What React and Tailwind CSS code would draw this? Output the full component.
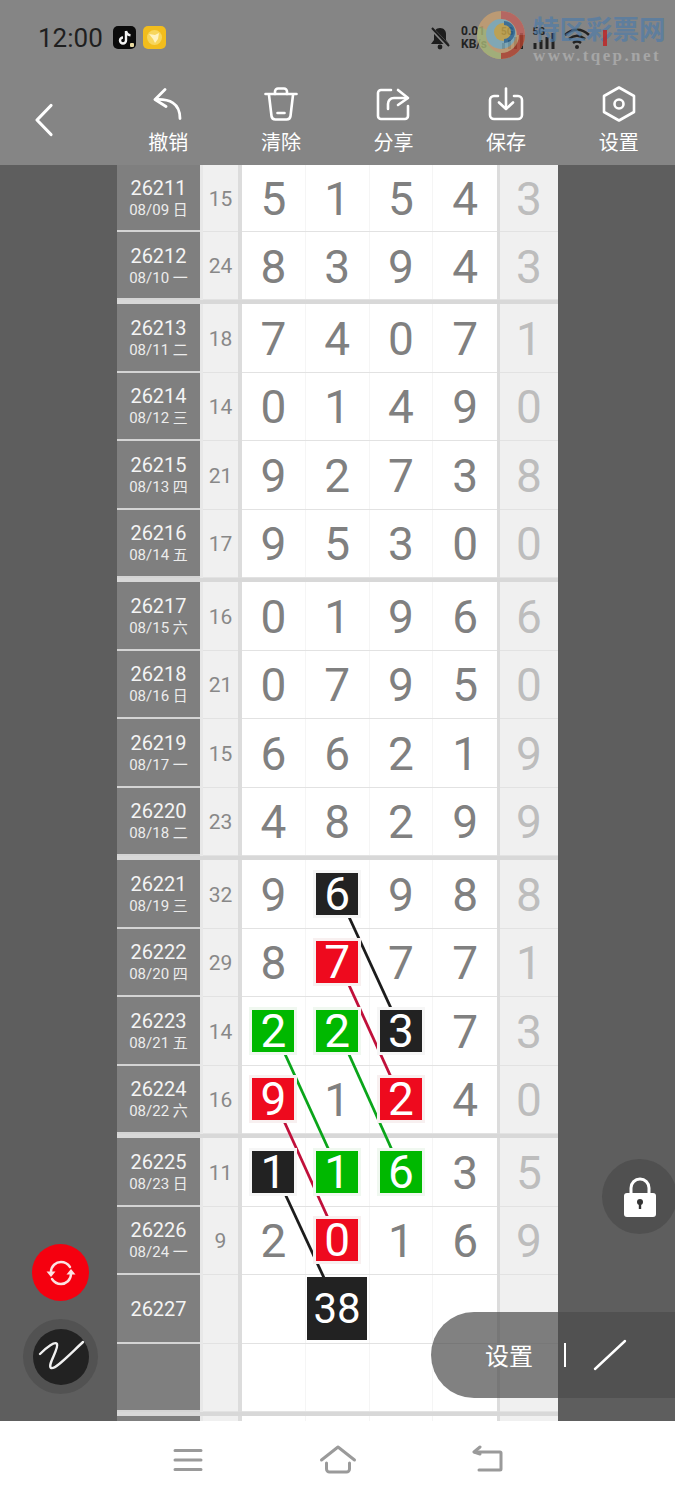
const ROWS = [
  { n: "26211", d: "08/09 日", s: "15", c: "5154", r: "3", h: "h-[67px]" },
  { n: "26212", d: "08/10 一", s: "24", c: "8394", r: "3", h: "h-[68px]", end: true },
  { n: "26213", d: "08/11 二", s: "18", c: "7407", r: "1" },
  { n: "26214", d: "08/12 三", s: "14", c: "0149", r: "0" },
  { n: "26215", d: "08/13 四", s: "21", c: "9273", r: "8" },
  { n: "26216", d: "08/14 五", s: "17", c: "9530", r: "0", end: true },
  { n: "26217", d: "08/15 六", s: "16", c: "0196", r: "6" },
  { n: "26218", d: "08/16 日", s: "21", c: "0795", r: "0" },
  { n: "26219", d: "08/17 一", s: "15", c: "6621", r: "9" },
  { n: "26220", d: "08/18 二", s: "23", c: "4829", r: "9", end: true },
  { n: "26221", d: "08/19 三", s: "32", c: "9698", r: "8", m: { 1: "k" } },
  { n: "26222", d: "08/20 四", s: "29", c: "8777", r: "1", m: { 1: "r" } },
  { n: "26223", d: "08/21 五", s: "14", c: "2237", r: "3", m: { 0: "g", 1: "g", 2: "k" } },
  { n: "26224", d: "08/22 六", s: "16", c: "9124", r: "0", m: { 0: "r", 2: "r" }, end: true },
  { n: "26225", d: "08/23 日", s: "11", c: "1163", r: "5", m: { 0: "k", 1: "g", 2: "g" } },
  { n: "26226", d: "08/24 一", s: "9", c: "2016", r: "9", m: { 1: "r" } },
  { n: "26227", d: "", s: "", c: "    ", r: "", big: "38" },
  { n: "", d: "", s: "", c: "    ", r: "", end: true },
  { n: "", d: "", s: "", c: "    ", r: "" },
];

const BOX = {
  k: "bg-[#222222] ring-[#f6f6f6]",
  r: "bg-[#ee0a1e] ring-[#f8f0f0]",
  g: "bg-[#00b800] ring-[#f0f8f0]",
};

const LINES = [
  { p: [338, 893, 401, 1030], c: "#1c1c1c" },
  { p: [338, 961, 401, 1099], c: "#c0103a" },
  { p: [274, 1030, 338, 1170], c: "#0aa51a" },
  { p: [338, 1030, 401, 1170], c: "#0aa51a" },
  { p: [274, 1099, 338, 1240], c: "#c0103a" },
  { p: [274, 1170, 338, 1308], c: "#1c1c1c" },
];

function Row({ row }) {
  const h = row.h || "h-[68.5px]";
  return (
    <div className={`grid grid-cols-[83px_3px_35px_4px_255px_3px_58px] ${h}`}>
      <div className="flex flex-col items-center justify-center bg-[#7f7f7f] pt-[1px] text-white border-b-2 border-[#d4d4d4]">
        <div className="text-[20px] leading-[24px] text-[#f4f4f4]">{row.n}</div>
        {row.d && <div className="text-[15px] leading-[20px] text-[#ececec]">{row.d}</div>}
      </div>
      <div className="bg-[#e8e8e8]" />
      <div className="flex items-center justify-center bg-[#f0f0f0] border-b border-[#e2e2e2] pt-[3px] text-[21px] text-[#888888]">{row.s}</div>
      <div className="bg-[#dcdcdc]" />
      <div className="grid grid-cols-4 bg-white border-b border-[#e2e2e2]">
        {row.c.split("").map((ch, i) => {
          const mark = row.m && row.m[i];
          const big = !mark && !ch.trim() && row.big && i === 1;
          return (
            <div key={i} className="flex items-center justify-center border-r border-[#f5f5f5] last:border-r-0 text-[46px] leading-none text-[#808080]">
              {mark ? (
                <div className={`relative z-10 flex h-[42px] w-[42px] items-center justify-center text-[46px] leading-none text-white ring-[3px] ${BOX[mark]}`}>{ch}</div>
              ) : big ? (
                <div className="relative z-10 flex h-[63px] w-[60px] shrink-0 items-center justify-center bg-[#222222] text-[42px] leading-none text-white">{row.big}</div>
              ) : ch.trim() ? (
                <span className="pt-[2px]">{ch}</span>
              ) : null}
            </div>
          );
        })}
      </div>
      <div className="bg-[#dcdcdc]" />
      <div className="flex items-center justify-center bg-[#f0f0f0] border-b border-[#e2e2e2] pt-[2px] text-[46px] leading-none text-[#bdbdbd]">{row.r}</div>
    </div>
  );
}

function ToolItem({ label, children }) {
  return (
    <div className="flex w-[112.6px] flex-col items-center">
      <div className="flex h-[38px] items-center justify-center pt-[1px]">{children}</div>
      <div className="mt-[9px] text-[20px] leading-[24px] text-white">{label}</div>
    </div>
  );
}

function Signal({ w }) {
  return (
    <svg width={w} height="24" viewBox="0 0 24 24">
      <text x="0" y="9" fontSize="10" fontWeight="700" fill="#222">5G</text>
      <rect x="1" y="17" width="3" height="6" fill="#222" />
      <rect x="7" y="14" width="3" height="9" fill="#222" />
      <rect x="13" y="11" width="3" height="12" fill="#222" />
      <rect x="19" y="7" width="3" height="16" fill="#222" />
    </svg>
  );
}

function StatusIcons() {
  return (
    <div className="flex items-center">
      <svg width="22" height="24" viewBox="0 0 22 24" className="mr-[10px]">
        <path d="M11 2c-4 0-6 3-6 6v6l-3 4h18l-3-4V8c0-3-2-6-6-6z" fill="#1d1d1d" />
        <circle cx="11" cy="21" r="2.4" fill="#1d1d1d" />
        <path d="M3 3l17 18" stroke="#858585" strokeWidth="4" />
        <path d="M3 2l17 18" stroke="#1d1d1d" strokeWidth="2" />
      </svg>
      <div className="w-[40px] text-[12px] font-bold leading-[13px] text-[#222222]">
        <div>0.01</div>
        <div>KB/s</div>
      </div>
      <div className="mr-[7px] flex">
        <Signal w={24} />
      </div>
      <div className="mr-[7px] flex">
        <Signal w={25} />
      </div>
      <svg width="26" height="22" viewBox="0 0 26 22">
        <path d="M1 8c7-7 17-7 24 0M5 12c5-4 11-4 16 0M9 16c2.500-2 5.500-2 8 0" fill="none" stroke="#222" strokeWidth="2.500" />
        <circle cx="13" cy="20" r="2" fill="#222" />
      </svg>
    </div>
  );
}

function Watermark() {
  return (
    <div className="absolute left-[473px] top-[8px] flex items-start">
      <svg width="56" height="54" viewBox="0 0 56 54" className="opacity-80">
        <circle cx="28" cy="27" r="24" fill="#c9a070" />
        <path d="M28 3a24 24 0 0 1 24 24h-8a16 16 0 0 0-16-16z" fill="#c2605a" />
        <path d="M52 27a24 24 0 0 1-24 24v-6a18 18 0 0 0 18-18z" fill="#b4432f" />
        <path d="M28 51A24 24 0 0 1 6 18l8 4a17 17 0 0 0 14 23z" fill="#a9b878" />
        <circle cx="28" cy="26" r="15" fill="#7fb0c0" />
        <circle cx="30" cy="24" r="9" fill="#c9a84a" />
        <path d="M31 15a9 9 0 0 1 0 18" fill="none" stroke="#2d6a9a" strokeWidth="4" />
      </svg>
      <div className="ml-[4px] mt-[7px] flex flex-col items-start">
        <div className="w-[134px] text-[26.500px] font-bold leading-[30px] whitespace-nowrap text-[#4f7ca8] opacity-70">特区彩票网</div>
        <div className="mt-[1px] text-[17px] font-bold leading-[19px] tracking-[2.400px] text-[#a6a6a6] [font-family:'Liberation_Serif',serif]">www.tqep.net</div>
      </div>
      <div className="absolute left-[130px] top-[22px] h-[16px] w-[4px] bg-[#c02020] opacity-80" />
    </div>
  );
}

export default function App() {
  return (
    <div className="relative h-[1500px] w-[675px] overflow-hidden bg-white [font-family:Roboto,'Noto_Sans_CJK_SC',sans-serif]">
      <header className="flex h-[165px] flex-col bg-[#858585]">
        <div className="flex h-[76px] items-center justify-between pl-[38px] pr-[85px] pb-[1px]">
          <div className="flex items-center">
            <span className="text-[26px] leading-none text-[#1f1f1f]">12:00</span>
            <svg width="23" height="23" viewBox="0 0 23 23" className="ml-[10px]">
              <rect width="23" height="23" rx="5" fill="#0b0b0b" />
              <path d="M13 5v9.500a3 3 0 1 1-3-3M13 5c.5 2.500 2 4 4.500 4.200" fill="none" stroke="#f4f4f4" strokeWidth="2.400" />
              <rect x="17" y="17" width="4" height="4" rx="1" fill="#e8d9a0" />
            </svg>
            <svg width="23" height="23" viewBox="0 0 23 23" className="ml-[7px]">
              <rect width="23" height="23" rx="5" fill="#f2bd1d" />
              <circle cx="11.500" cy="11.500" r="7.500" fill="#f7d65c" />
              <path d="M6 8l6 1 4-2-1 6-3 4-2-4z" fill="#fff3c0" />
            </svg>
          </div>
          <StatusIcons />
        </div>
        <div className="flex h-[89px] items-start pt-[8px]">
          <div className="flex h-[72px] w-[112px] items-center pl-[33px]">
            <svg width="22" height="34" viewBox="0 0 22 34">
              <path d="M18 2.500L4 17l14 14.500" fill="none" stroke="white" strokeWidth="3.200" strokeLinecap="round" strokeLinejoin="round" />
            </svg>
          </div>
          <ToolItem label="撤销">
            <svg width="30" height="32" viewBox="0 0 30 32" fill="none" stroke="white" strokeWidth="2.800" strokeLinecap="round" strokeLinejoin="round">
              <path d="M12 1.500L2 11.500l11 7" />
              <path d="M3 11.500c13-.5 24 3 24 19" />
            </svg>
          </ToolItem>
          <ToolItem label="清除">
            <svg width="34" height="34" viewBox="0 0 34 34" fill="none" stroke="white" strokeWidth="2.600" strokeLinecap="round" strokeLinejoin="round">
              <path d="M1.500 7h31" />
              <path d="M11 7V4.500a3 3 0 0 1 3-3h6a3 3 0 0 1 3 3V7" />
              <path d="M5 8l2.500 21a4 4 0 0 0 4 3.500h11a4 4 0 0 0 4-3.500L29 8" />
              <path d="M13.500 26h7" />
            </svg>
          </ToolItem>
          <ToolItem label="分享">
            <svg width="34" height="34" viewBox="0 0 34 34" fill="none" stroke="white" strokeWidth="2.600" strokeLinecap="round" strokeLinejoin="round">
              <path d="M15 3H5a3 3 0 0 0-3 3v23a3 3 0 0 0 3 3h24a3 3 0 0 0 3-3V19" />
              <path d="M22 3l10 8-10 7" />
              <path d="M31 11H18c-4 0-6 3-6 6v5" />
            </svg>
          </ToolItem>
          <ToolItem label="保存">
            <svg width="36" height="34" viewBox="0 0 36 34" fill="none" stroke="white" strokeWidth="2.600" strokeLinecap="round" strokeLinejoin="round">
              <path d="M10 9H6a4 4 0 0 0-4 4v15a4 4 0 0 0 4 4h24a4 4 0 0 0 4-4V13a4 4 0 0 0-4-4h-4" />
              <path d="M18 1.500v20" />
              <path d="M11 15.500l7 6.500 7-6.500" />
            </svg>
          </ToolItem>
          <ToolItem label="设置">
            <svg width="34" height="36" viewBox="0 0 34 36" fill="none" stroke="white" strokeWidth="2.600" strokeLinejoin="round">
              <path d="M17 1.500L32 10v16l-15 8.500L2 26V10z" />
              <circle cx="17" cy="18" r="4.500" />
            </svg>
          </ToolItem>
        </div>
      </header>

      <main className="relative h-[1256px] overflow-hidden bg-[#5e5e5e]">
        <div className="ml-[117px] flex w-[441px] flex-col">
          {ROWS.map((row, i) => (
            <div key={i} className="contents">
              <Row row={row} />
              {row.end && <div className="h-[4px] shrink-0 bg-[#d8d8d8]" />}
            </div>
          ))}
        </div>
        <svg width="675" height="1256" viewBox="0 165 675 1256" className="absolute left-0 top-0">
          {LINES.map((l, i) => (
            <line key={i} x1={l.p[0]} y1={l.p[1]} x2={l.p[2]} y2={l.p[3]} stroke={l.c} strokeWidth="2.800" />
          ))}
        </svg>
      </main>

      <nav className="flex h-[79px] items-center justify-center gap-[115px] bg-white pb-[1px]">
        <svg width="32" height="26" viewBox="0 0 32 26" fill="none" stroke="#9a9a9a" strokeWidth="3" strokeLinecap="round">
          <path d="M3 3.500h26M3 13h26M3 22.500h26" />
        </svg>
        <svg width="38" height="32" viewBox="0 0 38 32" fill="none" stroke="#9a9a9a" strokeWidth="3" strokeLinecap="round" strokeLinejoin="round">
          <path d="M2.500 16L19 3l16.500 13" />
          <path d="M7.500 19v6a3 3 0 0 0 3 3h17a3 3 0 0 0 3-3v-6" />
        </svg>
        <svg width="32" height="30" viewBox="0 0 32 30" fill="none" stroke="#9a9a9a" strokeWidth="3" strokeLinecap="round" strokeLinejoin="round">
          <path d="M8 2L2 7l6 2" />
          <path d="M3 7h25a1 1 0 0 1 1 1v16a1 1 0 0 1-1 1H7" />
        </svg>
      </nav>

      <Watermark />

      <div className="absolute left-[32px] top-[1244px] flex h-[57px] w-[57px] items-center justify-center rounded-full bg-[#f5000f]">
        <svg width="32" height="30" viewBox="0 0 32 30" fill="none" stroke="#fbe3e3" strokeWidth="2.400" strokeLinecap="round">
          <path d="M6 14C6 8 11 4 16 4c4 0 7 2 9 5" />
          <path d="M26 16c0 6-5 10-10 10-4 0-7-2-9-5" />
          <path d="M1.500 13.500h9L6 19z" fill="#fbe3e3" stroke="none" />
          <path d="M21.500 16.500h9L26 11z" fill="#fbe3e3" stroke="none" />
        </svg>
      </div>

      <div className="absolute left-[23px] top-[1319px] flex h-[75px] w-[75px] items-center justify-center rounded-full bg-[#525252]">
        <div className="flex h-[56px] w-[56px] items-center justify-center rounded-full bg-[#222222]">
          <svg width="56" height="56" viewBox="0 0 56 56" fill="none" stroke="#f1f1f1" strokeWidth="2.400" strokeLinecap="round">
            <path d="M7 25C14 18 22 12 24 15C26 20 14 36 18 39C22 41 38 24 50 13" />
          </svg>
        </div>
      </div>

      <div className="absolute left-[602px] top-[1159px] flex h-[75px] w-[75px] items-center justify-center rounded-full bg-[#505050]">
        <svg width="34" height="42" viewBox="0 0 34 42">
          <path d="M8 18v-6a9 9 0 0 1 18 0v6" fill="none" stroke="white" strokeWidth="3" />
          <rect x="1" y="17" width="32" height="24" rx="3" fill="white" />
          <circle cx="17" cy="26" r="3" fill="#333" />
          <rect x="15.800" y="27" width="2.400" height="6" fill="#333" />
        </svg>
      </div>

      <div className="absolute left-[431px] top-[1312px] flex h-[86px] w-[244px] items-center rounded-l-[43px] bg-[#4b4b4b]/70 pl-[54px]">
        <span className="pt-[3px] text-[24px] leading-none text-white">设置</span>
        <div className="ml-[31px] h-[24px] w-[2px] bg-white" />
        <svg width="34" height="32" viewBox="0 0 34 32" className="ml-[27px]">
          <path d="M2 30L32 2" stroke="white" strokeWidth="2.400" strokeLinecap="round" />
        </svg>
      </div>
    </div>
  );
}
